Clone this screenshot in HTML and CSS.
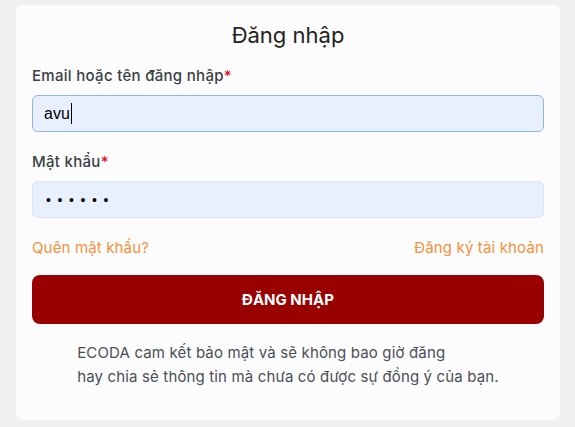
FILE: index.html
```html
<!DOCTYPE html>
<html lang="vi">
<head>
<meta charset="utf-8">
<title>Đăng nhập</title>
<link rel="stylesheet" href="styles.css">
</head>
<body>
<div class="card">
  <h1 class="title">Đăng nhập</h1>
  <form class="form">
    <div class="field">
      <label class="label">Email hoặc tên đăng nhập<span class="req">*</span></label>
      <div class="input focus"><span class="value">avu</span><span class="caret"></span></div>
    </div>
    <div class="field">
      <label class="label">Mật khẩu<span class="req">*</span></label>
      <div class="input"><span class="dots">••••••</span></div>
    </div>
    <div class="links">
      <a class="link">Quên mật khẩu?</a>
      <a class="link">Đăng ký tài khoản</a>
    </div>
    <button type="button" class="btn">ĐĂNG NHẬP</button>
    <div class="note-wrap">
      <p class="note">ECODA cam kết bảo mật và sẽ không bao giờ đăng<br>hay chia sẻ thông tin mà chưa có được sự đồng ý của bạn.</p>
    </div>
  </form>
</div>
</body>
</html>
```
FILE: styles.css
```css
* { box-sizing: border-box; }
html, body { margin: 0; padding: 0; }
body {
  background: #f0f0f0;
  font-family: Inter, "Noto Sans", sans-serif;
  color: #333;
  padding: 5px 15px 7px 16px;
}
.card {
  background: #fcfcfc;
  border-radius: 6px;
  width: 544px;
  height: 415px;
  padding: 16px 16px 0 16px;
}
.title {
  margin: 0;
  text-align: center;
  font-size: 22px;
  font-weight: 400;
  line-height: 28px;
  color: #222;
}
.form { display: flex; flex-direction: column; margin-top: 17px; }
.field { display: flex; flex-direction: column; }
.field + .field { margin-top: 20px; }
.label {
  font-size: 15px;
  font-weight: 500;
  line-height: 20px;
  letter-spacing: 0.3px;
  color: #3a3f47;
  margin-bottom: 9px;
}
.req { color: #e0102a; }
.input {
  height: 37px;
  background: #e8f0fe;
  border: 1px solid #dbe3ef;
  border-radius: 6px;
  display: flex;
  align-items: center;
  padding: 0 11px;
  font-family: "Liberation Sans", Arial, sans-serif;
  font-size: 16px;
  color: #000;
}
.input.focus { border-color: #8ab4f8; }
.caret { display: inline-block; width: 1px; height: 21px; background: #000; margin-left: 1px; }
.dots { font-size: 14px; letter-spacing: 6.6px; padding-left: 2px; }
.links {
  display: flex;
  justify-content: space-between;
  margin-top: 20px;
  font-size: 15px;
  line-height: 20px;
  letter-spacing: 0.15px;
}
.link { color: #f7913d; }
.btn {
  margin-top: 17px;
  height: 49px;
  border: 0;
  border-radius: 8px;
  background: #990000;
  color: #fff;
  font-family: Inter, "Noto Sans", sans-serif;
  font-size: 15px;
  font-weight: 700;
}
.note-wrap { text-align: center; margin-top: 17px; }
.note {
  display: inline-block;
  text-align: left;
  margin: 0;
  font-size: 15px;
  line-height: 24px;
  letter-spacing: 0.15px;
  color: #4a4f57;
}
```
